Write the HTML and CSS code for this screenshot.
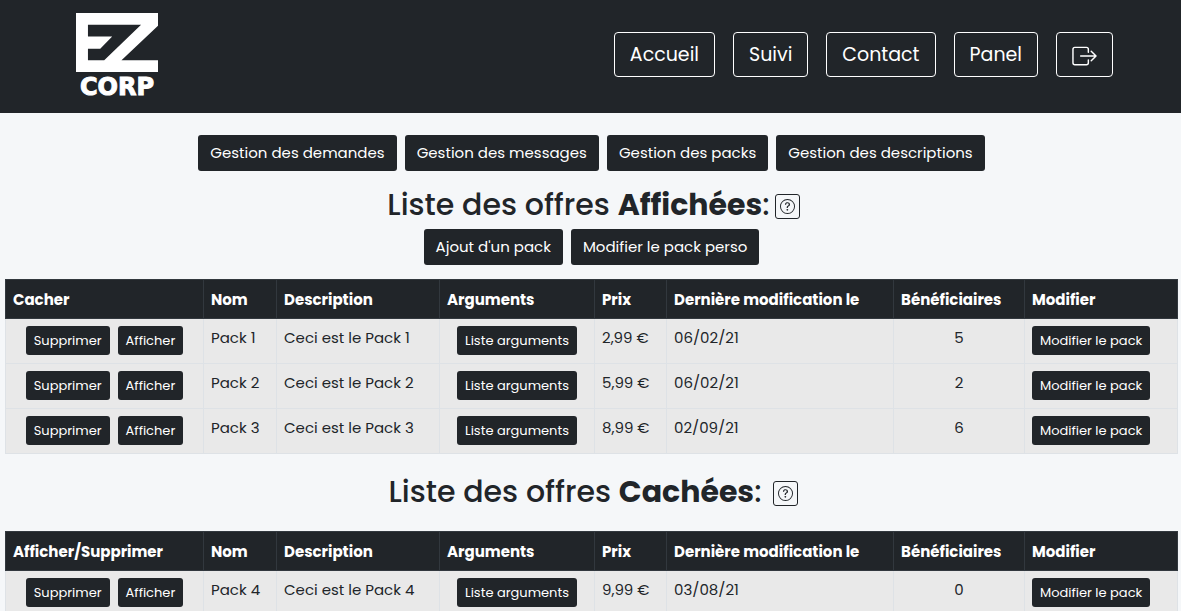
FILE: index.html
```html
<!DOCTYPE html>
<html lang="fr">
<head>
<meta charset="utf-8">
<meta name="viewport" content="width=device-width, initial-scale=1">
<title>EZ Corp - Gestion des packs</title>
<link rel="stylesheet" href="styles.css">
</head>
<body>
<svg width="0" height="0" class="sprite" aria-hidden="true">
  <symbol id="question" viewBox="0 0 16 16">
    <path d="M8 15A7 7 0 1 1 8 1a7 7 0 0 1 0 14zm0 1A8 8 0 1 0 8 0a8 8 0 0 0 0 16z"/>
    <path d="M5.255 5.786a.237.237 0 0 0 .241.247h.825c.138 0 .248-.113.266-.25.09-.656.54-1.134 1.342-1.134.686 0 1.314.343 1.314 1.168 0 .635-.374.927-.965 1.371-.673.489-1.206 1.06-1.168 1.987l.003.217a.25.25 0 0 0 .25.246h.811a.25.25 0 0 0 .25-.25v-.105c0-.718.273-.927 1.01-1.486.609-.463 1.244-.977 1.244-2.056 0-1.511-1.276-2.241-2.673-2.241-1.267 0-2.655.59-2.75 2.286zm1.557 5.763c0 .533.425.927 1.01.927.609 0 1.028-.394 1.028-.927 0-.552-.42-.94-1.029-.94-.584 0-1.009.388-1.009.94z"/>
  </symbol>
</svg>
<header class="header">
  <a class="logo" href="#" aria-label="EZ Corp">
    <svg class="logo-mark" viewBox="0 0 247 176" preserveAspectRatio="none" aria-hidden="true">
      <path fill="#fff" fill-rule="evenodd" d="M0 0H247V38L137 141H247V176H0ZM36 35V70H109L73 107H36V141H85L196 35Z"/>
    </svg>
    <span class="logo-name">CORP</span>
  </a>
  <nav class="nav">
    <a class="nav-link" href="#">Accueil</a>
    <a class="nav-link" href="#">Suivi</a>
    <a class="nav-link" href="#">Contact</a>
    <a class="nav-link" href="#">Panel</a>
    <a class="nav-link" href="#" aria-label="Déconnexion">
      <svg class="exit-icon" viewBox="0 0 26 20" fill="none" stroke="#fff" stroke-width="1.5" stroke-linecap="round" stroke-linejoin="round" aria-hidden="true">
        <path d="M17 6V3Q17 1 15 1H3Q1 1 1 3V17Q1 19 3 19H15Q17 19 17 17V14M9 10H25M20 5L25 10L20 15"/>
      </svg>
    </a>
  </nav>
</header>
<main class="main">
  <nav class="actions">
    <a class="btn" href="#">Gestion des demandes</a>
    <a class="btn" href="#">Gestion des messages</a>
    <a class="btn" href="#">Gestion des packs</a>
    <a class="btn" href="#">Gestion des descriptions</a>
  </nav>
  <div class="heading">
    <h2 class="title">Liste des offres <b>Affichées</b>:</h2>
    <button class="help" aria-label="Aide"><svg class="help-icon"><use href="#question"/></svg></button>
  </div>
  <div class="actions">
    <button class="btn">Ajout d'un pack</button>
    <button class="btn">Modifier le pack perso</button>
  </div>
  <table class="table">
    <colgroup><col class="c-act"><col class="c-nom"><col class="c-desc"><col class="c-arg"><col class="c-prix"><col class="c-date"><col class="c-ben"><col class="c-mod"></colgroup>
    <thead><tr><th>Cacher</th><th>Nom</th><th>Description</th><th>Arguments</th><th>Prix</th><th>Dernière modification le</th><th>Bénéficiaires</th><th>Modifier</th></tr></thead>
    <tbody>
      <tr><td><div class="pair"><button class="btn btn-sm">Supprimer</button><button class="btn btn-sm">Afficher</button></div></td><td>Pack 1</td><td>Ceci est le Pack 1</td><td class="center"><button class="btn btn-sm">Liste arguments</button></td><td>2,99 €</td><td>06/02/21</td><td class="center">5</td><td><button class="btn btn-sm">Modifier le pack</button></td></tr>
      <tr><td><div class="pair"><button class="btn btn-sm">Supprimer</button><button class="btn btn-sm">Afficher</button></div></td><td>Pack 2</td><td>Ceci est le Pack 2</td><td class="center"><button class="btn btn-sm">Liste arguments</button></td><td>5,99 €</td><td>06/02/21</td><td class="center">2</td><td><button class="btn btn-sm">Modifier le pack</button></td></tr>
      <tr><td><div class="pair"><button class="btn btn-sm">Supprimer</button><button class="btn btn-sm">Afficher</button></div></td><td>Pack 3</td><td>Ceci est le Pack 3</td><td class="center"><button class="btn btn-sm">Liste arguments</button></td><td>8,99 €</td><td>02/09/21</td><td class="center">6</td><td><button class="btn btn-sm">Modifier le pack</button></td></tr>
    </tbody>
  </table>
  <div class="heading heading-hidden">
    <h2 class="title">Liste des offres <b>Cachées</b>:</h2>
    <button class="help" aria-label="Aide"><svg class="help-icon"><use href="#question"/></svg></button>
  </div>
  <table class="table">
    <colgroup><col class="c-act"><col class="c-nom"><col class="c-desc"><col class="c-arg"><col class="c-prix"><col class="c-date"><col class="c-ben"><col class="c-mod"></colgroup>
    <thead><tr><th>Afficher/Supprimer</th><th>Nom</th><th>Description</th><th>Arguments</th><th>Prix</th><th>Dernière modification le</th><th>Bénéficiaires</th><th>Modifier</th></tr></thead>
    <tbody>
      <tr><td><div class="pair"><button class="btn btn-sm">Supprimer</button><button class="btn btn-sm">Afficher</button></div></td><td>Pack 4</td><td>Ceci est le Pack 4</td><td class="center"><button class="btn btn-sm">Liste arguments</button></td><td>9,99 €</td><td>03/08/21</td><td class="center">0</td><td><button class="btn btn-sm">Modifier le pack</button></td></tr>
    </tbody>
  </table>
</main>
</body>
</html>
```
FILE: styles.css
```css
* { box-sizing: border-box; }
body {
  margin: 0;
  background: #f5f7f9;
  color: #212529;
  font: 15px/24px Poppins, Inter, sans-serif;
}
.sprite { display: block; }
.header {
  display: flex;
  justify-content: space-between;
  align-items: flex-start;
  background: #212529;
  padding: 13px 68px 14px 76px;
}
.logo {
  display: flex;
  flex-direction: column;
  align-items: center;
  gap: 4px;
  color: #fff;
  text-decoration: none;
}
.logo-mark { display: block; width: 82px; height: 59px; }
.logo-name {
  font: bold 24px/23px "DejaVu Sans", sans-serif;
  -webkit-text-stroke: 1px #fff;
}
.nav { display: flex; gap: 18px; padding-top: 19px; }
.nav-link {
  display: flex;
  align-items: center;
  height: 45px;
  padding: 0 15px;
  border: 1px solid #fff;
  border-radius: 4px;
  color: #fff;
  font-size: 19px;
  text-decoration: none;
}
.exit-icon { width: 25px; height: 20px; margin-top: 3px; }
.main { padding: 22px 3px 0 5px; }
.actions { display: flex; flex-wrap: wrap; justify-content: center; gap: 8px; }
.btn {
  padding: 6px 12px;
  border: 0;
  border-radius: 3px;
  background: #212529;
  color: #fff;
  font: inherit;
  text-decoration: none;
  white-space: nowrap;
}
.btn-sm { display: inline-block; padding: 4px 8px; font-size: 13px; line-height: 21px; vertical-align: top; }
.heading { display: flex; justify-content: center; align-items: center; gap: 5px; height: 58px; padding: 10px 0 0 4px; }
.heading-hidden { gap: 12px; height: 77px; padding: 0 0 2px 4px; }
.title { margin: 0; font-size: 30px; line-height: 38px; font-weight: 500; }
.help {
  display: flex;
  align-items: center;
  justify-content: center;
  width: 25px;
  height: 25px;
  margin-top: 3px;
  padding: 0;
  border: 1px solid #212529;
  border-radius: 3px;
  background: none;
  color: inherit;
}
.help-icon { width: 15px; height: 15px; fill: #212529; }
.table {
  width: 100%;
  margin-top: 14px;
  border-collapse: collapse;
  table-layout: fixed;
  background: #e9e9e9;
}
.heading + .table { margin-top: 0; }
.c-act { width: 198px; }
.c-nom { width: 73px; }
.c-desc { width: 163px; }
.c-arg { width: 155px; }
.c-prix { width: 72px; }
.c-date { width: 227px; }
.c-ben { width: 131px; }
.table th, .table td { padding: 7px 7px 8px; border: 1px solid #dee2e6; text-align: left; vertical-align: top; white-space: nowrap; }
.table th { padding: 8px 7px 6px; background: #212529; border-color: #32383e; color: #fff; font-weight: 700; }
.table td { line-height: 24px; }
.table .center { text-align: center; }
.pair { display: flex; justify-content: center; gap: 8px; }
```
